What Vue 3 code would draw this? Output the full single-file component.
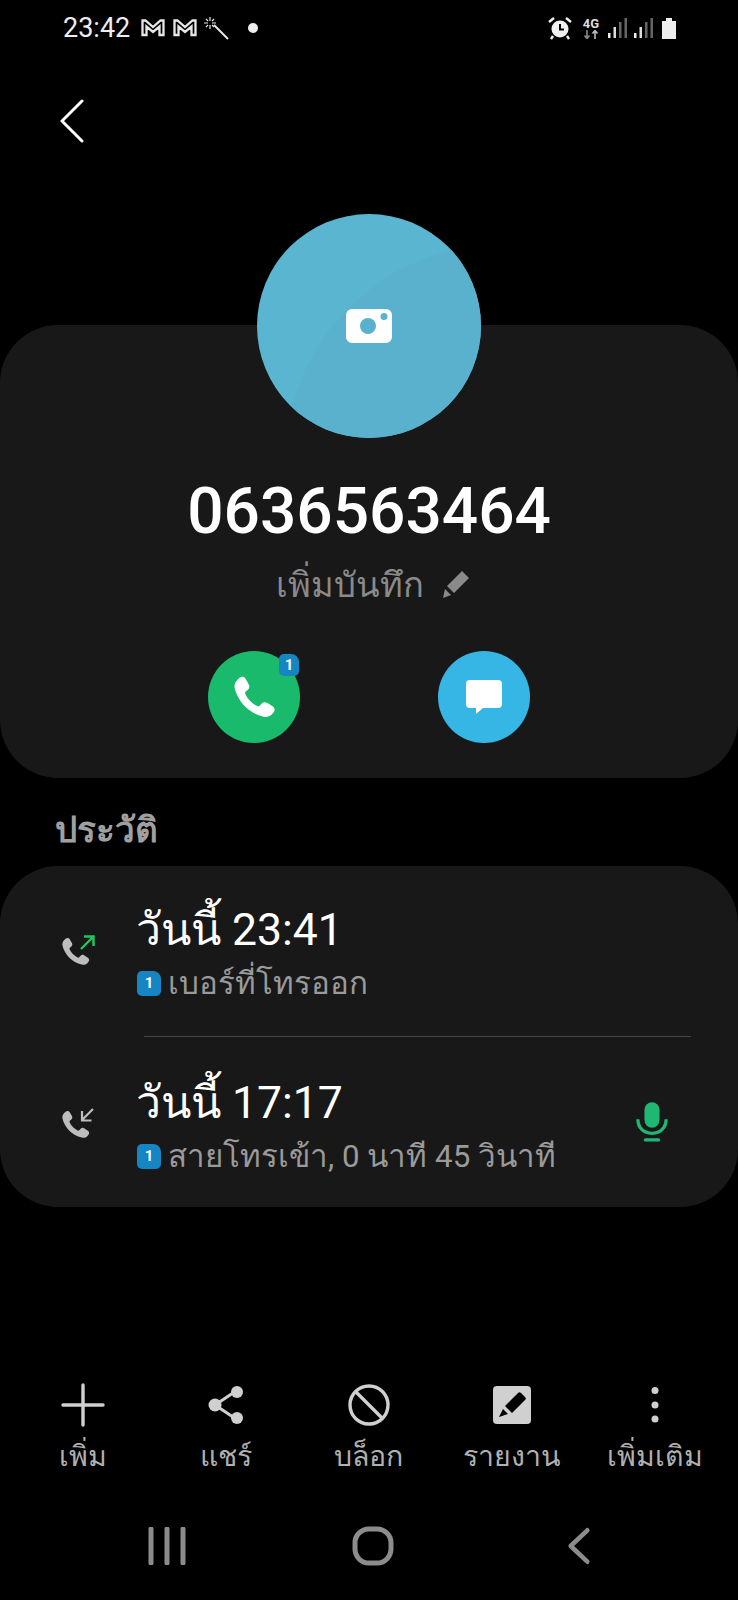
<script setup>
const actions = [
  { label: 'เพิ่ม', icon: 'plus' },
  { label: 'แชร์', icon: 'share' },
  { label: 'บล็อก', icon: 'block' },
  { label: 'รายงาน', icon: 'report' },
  { label: 'เพิ่มเติม', icon: 'more' },
]
const phonePath = 'M5.2 3.2c1-.8 2.3-.6 2.9.4l1.5 2.6c.5.8.3 1.8-.4 2.4l-1 .9c-.3.3-.4.7-.2 1.1 1.1 2.4 3 4.4 5.5 5.6.4.2.8.1 1.1-.2l1-1c.6-.7 1.6-.8 2.4-.3l2.6 1.6c1 .6 1.2 2 .4 2.9l-.8.9c-1 1-2.4 1.4-3.8 1C9.8 19.6 4.6 14.4 3.1 8c-.3-1.4.1-2.8 1.200-3.900z'
</script>

<template>
  <div class="screen">
    <div class="status">
      <span class="time">23:42</span>
      <svg class="gm" viewBox="0 0 24 18" width="24" height="18"><path d="M1.500 16V1.500h3L12 8l7.500-6.500h3V16h-4V7.500L12 13 5.500 7.500V16z" fill="none" stroke="#e8e8e8" stroke-width="2.300" /></svg>
      <svg class="gm gm2" viewBox="0 0 24 18" width="24" height="18"><path d="M1.500 16V1.500h3L12 8l7.500-6.500h3V16h-4V7.500L12 13 5.500 7.500V16z" fill="none" stroke="#e8e8e8" stroke-width="2.300" /></svg>
      <svg class="wand" viewBox="0 0 26 24" width="26" height="24"><path d="M11 9l14 14" stroke="#e8e8e8" stroke-width="2" /><path d="M7 1v4M7 9v4M1 7h4M9 7h4M3 3l2 2M9 9l2 2M11 3L9 5M3 11l2-2" stroke="#e8e8e8" stroke-width="1.200" fill="none" /></svg>
      <span class="dot"></span>
      <span class="spacer"></span>
      <svg viewBox="0 0 26 24" width="26" height="24"><circle cx="13" cy="13" r="8.500" fill="#f0f0f0" /><path d="M13 8v5.500h4" stroke="#000" stroke-width="2" fill="none" /><path d="M2 6l5-4M24 6l-5-4M6 20l-2 3M20 20l2 3" stroke="#f0f0f0" stroke-width="2.400" /></svg>
      <div class="net">
        <span>4G</span>
        <svg viewBox="0 0 16 9" width="16" height="9"><path d="M4 0v8M1.500 5.500L4 8.500l2.500-3" stroke="#8a8a8a" stroke-width="1.600" fill="none" /><path d="M12 9V1M9.500 3.500L12 .5l2.500 3" stroke="#bdbdbd" stroke-width="1.600" fill="none" /></svg>
      </div>
      <svg class="sig" viewBox="0 0 19 22" width="19" height="22"><rect x="0" y="16" width="2.500" height="5" fill="#eee" /><rect x="5.500" y="10" width="2.500" height="11" fill="#ddd" /><rect x="11" y="5" width="2.500" height="16" fill="#666" /><rect x="16.500" y="1" width="2.500" height="20" fill="#666" /></svg>
      <svg class="sig2" viewBox="0 0 19 22" width="19" height="22"><rect x="0" y="16" width="2.500" height="5" fill="#eee" /><rect x="5.500" y="10" width="2.500" height="11" fill="#ddd" /><rect x="11" y="5" width="2.500" height="16" fill="#666" /><rect x="16.500" y="1" width="2.500" height="20" fill="#666" /></svg>
      <svg class="batt" viewBox="0 0 14 21" width="14" height="21"><path d="M0 3h4V0h6v3h4v18H0z" fill="#eee" /></svg>
    </div>

    <div class="topbar">
      <svg viewBox="0 0 24 44" width="24" height="44"><path d="M22 2L2 22l20 20" fill="none" stroke="#fff" stroke-width="3" stroke-linecap="round" stroke-linejoin="round" /></svg>
    </div>

    <div class="avatar">
      <svg viewBox="0 0 48 36" width="48" height="36"><path fill-rule="evenodd" d="M7 1h34a6 6 0 0 1 6 6v22a6 6 0 0 1-6 6H7a6 6 0 0 1-6-6V7a6 6 0 0 1 6-6zM23 10a8 8 0 1 0 0 16 8 8 0 0 0 0-16zM39 5a3.500 3.500 0 1 0 0 7 3.500 3.500 0 0 0 0-7z" fill="#fff" /></svg>
    </div>

    <section class="card head">
      <div class="number">0636563464</div>
      <div class="memo">
        <span>เพิ่มบันทึก</span>
        <svg viewBox="0 0 30 30" width="30" height="30"><path d="M21 2l7 7-15 15-7-7zM4 20l6 6-8 3z" fill="#8a8a8a" /></svg>
      </div>
      <div class="buttons">
        <div class="round green">
          <svg viewBox="0 0 24 24" width="52" height="52"><path :d="phonePath" fill="#fff" /></svg>
          <span class="sim over">1</span>
        </div>
        <div class="round blue">
          <svg viewBox="0 0 40 40" width="40" height="40"><path d="M6 3h28a4 4 0 0 1 4 4v20a4 4 0 0 1-4 4H19l-7 6v-6H6a4 4 0 0 1-4-4V7a4 4 0 0 1 4-4z" fill="#fff" /></svg>
        </div>
      </div>
    </section>

    <h2 class="history">ประวัติ</h2>

    <section class="card log">
      <div class="row">
        <svg class="call" viewBox="0 0 36 36" width="36" height="36">
          <g transform="translate(-2 1) scale(1.450)"><path :d="phonePath" fill="#bdbdbd" /></g>
          <path d="M21 16L33 4M24 3.500h9.500V13" fill="none" stroke="#22c55e" stroke-width="2.400" />
        </svg>
        <div class="text">
          <div class="title">วันนี้ 23:41</div>
          <div class="sub"><span class="sim">1</span>เบอร์ที่โทรออก</div>
        </div>
      </div>
      <div class="divider"></div>
      <div class="row">
        <svg class="call" viewBox="0 0 36 36" width="36" height="36">
          <g transform="translate(-2 1) scale(1.450)"><path :d="phonePath" fill="#bdbdbd" /></g>
          <path d="M33 3L22 14M22 5v9.500h9.500" fill="none" stroke="#bdbdbd" stroke-width="2.200" />
        </svg>
        <div class="text">
          <div class="title">วันนี้ 17:17</div>
          <div class="sub"><span class="sim">1</span>สายโทรเข้า, 0 นาที 45 วินาที</div>
        </div>
        <svg class="mic" viewBox="0 0 34 44" width="32" height="42">
          <rect x="9" y="1" width="16" height="27" rx="8" fill="#1fb872" />
          <path d="M2 19c0 9 6 15 15 15s15-6 15-15" fill="none" stroke="#1fb872" stroke-width="3.500" />
          <path d="M10 41h14" stroke="#1fb872" stroke-width="3.500" stroke-linecap="round" />
        </svg>
      </div>
    </section>

    <div class="toolbar">
      <div v-for="a in actions" :key="a.label" class="action">
        <svg viewBox="0 0 44 44" width="44" height="44">
          <template v-if="a.icon === 'plus'">
            <path d="M2 22h40M22 2v40" stroke="#d0d0d0" stroke-width="3.400" stroke-linecap="round" />
          </template>
          <template v-else-if="a.icon === 'share'">
            <path d="M32 8L11 22l21 14" fill="none" stroke="#d0d0d0" stroke-width="3" />
            <circle cx="33" cy="9" r="6" fill="#d0d0d0" /><circle cx="11" cy="22" r="6.500" fill="#d0d0d0" /><circle cx="33" cy="35" r="6" fill="#d0d0d0" />
          </template>
          <template v-else-if="a.icon === 'block'">
            <circle cx="22" cy="22" r="19" fill="none" stroke="#d0d0d0" stroke-width="3.400" />
            <path d="M9 9l26 26" stroke="#d0d0d0" stroke-width="3.400" />
          </template>
          <template v-else-if="a.icon === 'report'">
            <path fill-rule="evenodd" d="M7 3h30a4 4 0 0 1 4 4v30a4 4 0 0 1-4 4H7a4 4 0 0 1-4-4V7a4 4 0 0 1 4-4zM28 10l-13 13 7 7 13-13a2 2 0 0 0 0-3l-4-4a2 2 0 0 0-3 0zM13 26l-4 8 9-3z" fill="#d0d0d0" />
          </template>
          <template v-else>
            <circle cx="22" cy="7.500" r="3.500" fill="#d0d0d0" /><circle cx="22" cy="22" r="3.500" fill="#d0d0d0" /><circle cx="22" cy="36" r="3.500" fill="#d0d0d0" />
          </template>
        </svg>
        <span>{{ a.label }}</span>
      </div>
    </div>

    <div class="nav">
      <svg viewBox="0 0 38 38" width="38" height="38"><path d="M3 2v34M19 2v34M35 2v34" stroke="#8c8c8c" stroke-width="5" stroke-linecap="round" /></svg>
      <svg viewBox="0 0 42 40" width="42" height="40"><rect x="3" y="3" width="36" height="34" rx="14" fill="none" stroke="#8c8c8c" stroke-width="5" /></svg>
      <svg class="nav-back" viewBox="0 0 26 40" width="24" height="40"><path d="M22 3L4 20l18 17" fill="none" stroke="#8c8c8c" stroke-width="5" stroke-linecap="round" stroke-linejoin="round" /></svg>
    </div>
  </div>
</template>

<style>
html, body { margin: 0; background: #000; }
</style>

<style scoped>
.screen {
  width: 738px;
  height: 1600px;
  background: #000;
  color: #fff;
  font-family: Roboto, "Noto Sans", "DejaVu Sans", sans-serif;
  display: flex;
  flex-direction: column;
  overflow: hidden;
}
.status {
  height: 56px;
  box-sizing: border-box;
  padding: 0 62px 0 63px;
  display: flex;
  align-items: center;
  flex-shrink: 0;
}
.time { font-size: 27px; color: #eee; width: 78px; }
.gm2 { margin-left: 8px; }
.wand { margin-left: 6px; }
.dot { width: 10px; height: 10px; border-radius: 50%; background: #eee; margin-left: 19px; }
.spacer { flex: 1; }
.net { display: flex; flex-direction: column; align-items: center; margin-left: 10px; font-size: 13px; font-weight: 700; line-height: 12px; color: #ddd; }
.sig { margin-left: 9px; }
.sig2 { margin-left: 7px; }
.batt { margin-left: 9px; }
.topbar { height: 44px; padding: 43px 0 0 60px; flex-shrink: 0; }
.avatar {
  width: 224px;
  height: 224px;
  border-radius: 50%;
  background: #5ab5d0;
  align-self: center;
  margin: 71px 0 -113px;
  position: relative;
  z-index: 1;
  overflow: hidden;
  display: flex;
  align-items: center;
  justify-content: center;
  flex-shrink: 0;
}
.avatar::before {
  content: '';
  position: absolute;
  left: 28px;
  top: 30px;
  width: 436px;
  height: 436px;
  border-radius: 50%;
  background: #59b1cd;
}
.avatar svg { position: relative; }
.card { background: #181818; border-radius: 58px; flex-shrink: 0; }
.head {
  height: 453px;
  box-sizing: border-box;
  padding-top: 149px;
  display: flex;
  flex-direction: column;
  align-items: center;
}
.number { font-size: 64px; font-weight: 500; line-height: 76px; }
.memo { display: flex; align-items: center; gap: 17px; margin-top: 9px; height: 50px; font-size: 34.500px; color: #8a8a8a; padding-left: 8px; }
.buttons { display: flex; gap: 138px; margin-top: 42px; }
.round { width: 92px; height: 92px; border-radius: 50%; display: flex; align-items: center; justify-content: center; position: relative; }
.green { background: #1aba6d; }
.blue { background: #36b6e4; }
.sim {
  display: inline-flex;
  align-items: center;
  justify-content: center;
  width: 24px;
  height: 25px;
  border-radius: 5px 8px 5px 5px;
  background: #1585c4;
  color: #fff;
  font-size: 15px;
  font-weight: 700;
  flex-shrink: 0;
}
.over { position: absolute; top: 3px; right: 1px; width: 20px; height: 22px; }
.history { margin: 30px 0 0 55px; height: 58px; font-size: 35px; line-height: 46px; font-weight: 700; color: #a0a0a0; }
.log { height: 341px; box-sizing: border-box; padding-top: 21px; }
.row { display: flex; align-items: center; height: 128px; padding: 0 70px 0 60px; }
.text { margin-left: 41px; flex: 1; }
.title { font-size: 44.500px; line-height: 66px; margin-left: -1px; }
.sub { display: flex; align-items: center; gap: 7px; font-size: 31.300px; line-height: 42px; color: #9a9a9a; }
.sub .sim { margin-top: -2px; }
.mic { margin-bottom: 4px; }
.divider { height: 1px; background: #444; margin: 21px 47px 23px 144px; }
.toolbar { display: grid; grid-template-columns: repeat(5, 1fr); padding: 0 12px; margin-top: 176px; flex-shrink: 0; }
.action { display: flex; flex-direction: column; align-items: center; font-size: 28.500px; color: #b0b0b0; line-height: 40px; }
.action span { margin-top: 10px; white-space: nowrap; }
.nav { display: flex; justify-content: center; align-items: center; gap: 166px; margin-top: 49px; }
.nav-back { margin-left: 7px; }
</style>
